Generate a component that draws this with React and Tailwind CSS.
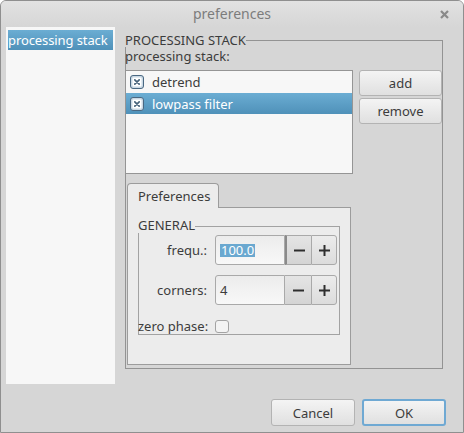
import React from 'react';

const CheckIcon = () => (
  <svg width="14" height="14" viewBox="0 0 14 14" className="shrink-0">
    <rect x="0.5" y="0.5" width="13" height="13" rx="2.5" fill="#c9d8e4" stroke="#4a6882" />
    <rect x="2.5" y="2.5" width="9" height="9" rx="1" fill="#ffffff" />
    <path d="M4.8 4.8 L9.2 9.2 M9.2 4.8 L4.8 9.2" stroke="#46627a" strokeWidth="1.7" strokeLinecap="round" />
  </svg>
);

function SpinRow({ label, value, focused }) {
  return (
    <div className="flex items-center h-[30px]">
      <span className="w-[69px] text-right whitespace-nowrap">{label}</span>
      <div className="ml-[8px] flex h-[30px]">
        <div className="w-[70px] h-full border border-[#a9a9a9] rounded-l-[3px] bg-gradient-to-b from-[#ececec] to-[#f8f8f8] flex items-center pl-[4px]">
          {focused ? (
            <span className="bg-[#6aa8d0] text-white leading-[12px] h-[13px] px-px">{value}</span>
          ) : (
            <span>{value}</span>
          )}
        </div>
        <button className={`w-[26px] h-full border-y border-[#a9a9a9] ${focused ? 'border-l-2 border-l-[#8a8a8a]' : ''} bg-gradient-to-b from-[#e4e4e4] to-[#d4d4d4] flex items-center justify-center`}>
          <svg width="11" height="11" viewBox="0 0 11 11"><path d="M0 5.5 H11" stroke="#2e2e2e" strokeWidth="2" /></svg>
        </button>
        <button className="w-[26px] h-full border border-[#a9a9a9] rounded-r-[3px] bg-gradient-to-b from-[#ececec] to-[#dcdcdc] flex items-center justify-center">
          <svg width="11" height="11" viewBox="0 0 11 11"><path d="M0 5.5 H11 M5.5 0 V11" stroke="#2e2e2e" strokeWidth="2" /></svg>
        </button>
      </div>
    </div>
  );
}

export default function App() {
  return (
    <div className="w-[464px] h-[433px] bg-[#d6d6d6] border border-[#8f8f8f] rounded-t-[6px] flex flex-col text-[13px] leading-[16px] text-[#3c3c3c] font-['Noto_Sans',sans-serif] overflow-hidden">
      {/* title bar */}
      <div className="relative h-[26px] shrink-0 flex items-center justify-center bg-gradient-to-b from-[#e2e2e2] to-[#d6d6d6]">
        <span className="text-[14px] text-[#7c7c7c]">preferences</span>
        <svg width="9" height="9" viewBox="0 0 9 9" className="absolute right-[14px] top-[9px]">
          <path d="M1 1 L8 8 M8 1 L1 8" stroke="#8a8a8a" strokeWidth="2.2" />
        </svg>
      </div>

      <div className="flex pl-[5px]">
        {/* left list */}
        <div className="w-[109px] h-[357px] bg-[#f7f7f7] pt-[3px] px-[2px]">
          <div className="h-[20px] leading-[20px] bg-gradient-to-b from-[#6badd3] to-[#4f91b9] text-white whitespace-nowrap tracking-[-0.1px]">processing stack</div>
        </div>

        {/* processing stack group */}
        <div className="ml-[10px] mt-[6px] relative w-[318px] h-[336px]">
          <div className="absolute left-0 right-0 top-[7px] bottom-0 border border-[#939393]" />
          <div className="relative flex flex-col">
            <span className="self-start bg-[#d6d6d6] leading-[14px]">PROCESSING STACK</span>
            <span className="leading-[16px] mt-[1px]">processing stack:</span>
            <div className="flex mt-[6px]">
              <div className="w-[228px] h-[104px] border border-[#959595] bg-[#f7f7f7] flex flex-col">
                <div className="h-[22px] flex items-center pl-[4px] gap-[8px]">
                  <CheckIcon />
                  <span>detrend</span>
                </div>
                <div className="h-[21px] flex items-center pl-[4px] gap-[8px] bg-gradient-to-b from-[#6badd3] to-[#4f91b9] text-white">
                  <CheckIcon />
                  <span>lowpass filter</span>
                </div>
              </div>
              <div className="ml-[6px] flex flex-col gap-[2px]">
                <button className="w-[83px] h-[26px] border border-[#b3b3b3] rounded-[3px] bg-gradient-to-b from-[#f4f4f4] to-[#e0e0e0]">add</button>
                <button className="w-[83px] h-[26px] border border-[#b3b3b3] rounded-[3px] bg-gradient-to-b from-[#f4f4f4] to-[#e0e0e0]">remove</button>
              </div>
            </div>

            {/* tab widget */}
            <div className="ml-[2px] mt-[9px] flex flex-col">
              <div className="relative z-10 -mb-px w-[92px] h-[25px] border border-b-0 border-[#9c9c9c] rounded-t-[4px] bg-[#ececec] pl-[10px] pt-[4px]">Preferences</div>
              <div className="w-[224px] h-[158px] border border-[#9c9c9c] bg-[#ececec] pl-[10px] pt-[10px]">
                <div className="relative w-[202px] h-[117px]">
                  <div className="absolute left-0 right-0 top-[8px] bottom-0 border border-[#a2a2a2]" />
                  <div className="relative flex flex-col">
                    <span className="self-start bg-[#ececec] leading-[15px]">GENERAL</span>
                    <div className="mt-[2px] flex flex-col gap-[10px]">
                      <SpinRow label="frequ.:" value="100.0" focused />
                      <SpinRow label="corners:" value="4" />
                    </div>
                    <div className="mt-[13px] flex items-center">
                      <span className="w-[69px] text-right whitespace-nowrap">zero phase:</span>
                      <span className="ml-[8px] w-[14px] h-[13px] border border-[#a3a3a3] rounded-[3px] bg-[#f3f3f3]" />
                    </div>
                  </div>
                </div>
              </div>
            </div>
          </div>
        </div>
      </div>

      {/* footer */}
      <div className="flex justify-end gap-[7px] pr-[17px] mt-[15px]">
        <button className="w-[84px] h-[27px] border border-[#b3b3b3] rounded-[3px] bg-gradient-to-b from-[#f4f4f4] to-[#e0e0e0]">Cancel</button>
        <button className="w-[84px] h-[27px] border-2 border-[#6fa9d3] rounded-[3px] bg-gradient-to-b from-[#f4f4f4] to-[#e0e0e0]">OK</button>
      </div>
    </div>
  );
}
